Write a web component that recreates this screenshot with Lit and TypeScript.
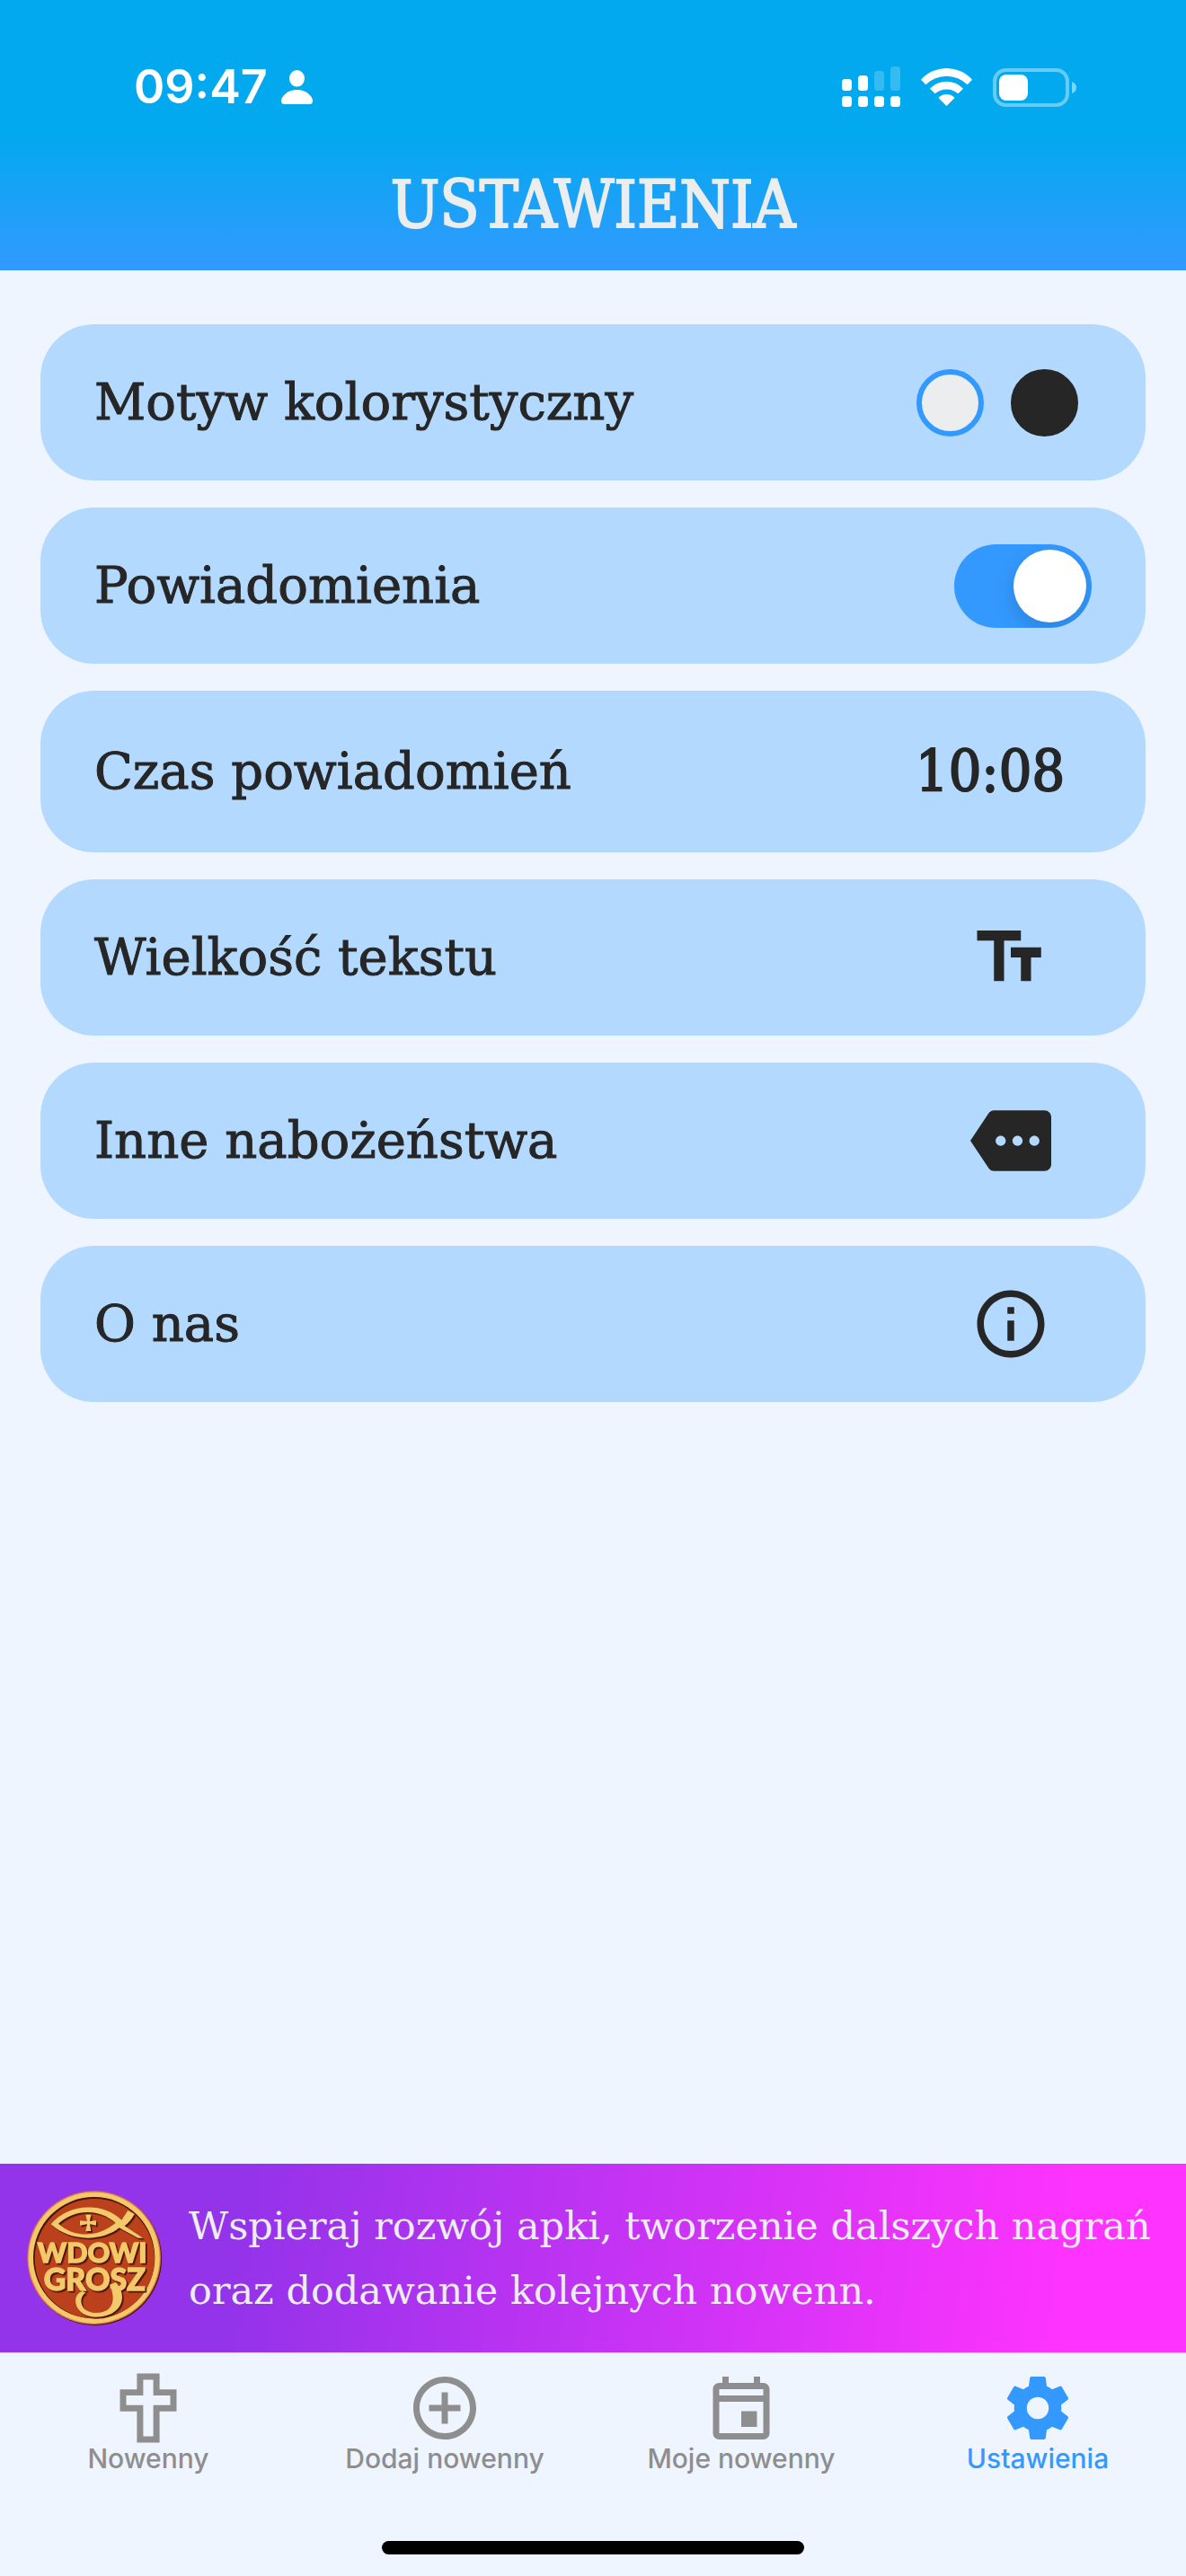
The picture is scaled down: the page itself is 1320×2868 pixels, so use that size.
import { LitElement, html, svg, css, nothing } from "lit";
import { customElement, property, state } from "lit/decorators.js";
import { classMap } from "lit/directives/class-map.js";

const ICONS: Record<string, string> = {
  textSize: "M2 4v3h5v12h3V7h5V4H2zm19 5h-9v3h3v7h3v-7h3V9z",
  more:
    "M22 3H7c-.69 0-1.23.35-1.59.88L0 12l5.41 8.11c.36.53.9.89 1.59.89h15c1.1 0 2-.9 2-2V5c0-1.1-.9-2-2-2zM9 13.5c-.83 0-1.5-.67-1.5-1.5s.67-1.5 1.5-1.5 1.5.67 1.5 1.5-.67 1.5-1.5 1.5zm5 0c-.83 0-1.5-.67-1.5-1.5s.67-1.5 1.5-1.5 1.5.67 1.5 1.5-.67 1.5-1.5 1.5zm5 0c-.83 0-1.5-.67-1.5-1.5s.67-1.5 1.5-1.5 1.5.67 1.5 1.5-.67 1.5-1.5 1.5z",
  info:
    "M11 17h2v-6h-2v6zm1-15C6.48 2 2 6.48 2 12s4.48 10 10 10 10-4.48 10-10S17.52 2 12 2zm0 18c-4.41 0-8-3.59-8-8s3.59-8 8-8 8 3.59 8 8-3.59 8-8 8zM11 9h2V7h-2v2z",
  cross:
    "M8.4 1h7.2v5.1H21v7h-5.4V23H8.4v-9.9H3v-7h5.4zM10.4 3v5H5v3.1h5.4V21h3.2v-9.9H19V8h-5.4V3z",
  add:
    "M13 7h-2v4H7v2h4v4h2v-4h4v-2h-4V7zm-1-5C6.48 2 2 6.48 2 12s4.48 10 10 10 10-4.48 10-10S17.52 2 12 2zm0 18c-4.41 0-8-3.59-8-8s3.59-8 8-8 8 3.59 8 8-3.59 8-8 8z",
  calendar:
    "M19 4h-1V2h-2v2H8V2H6v2H5c-1.1 0-2 .9-2 2v14c0 1.1.9 2 2 2h14c1.1 0 2-.9 2-2V6c0-1.1-.9-2-2-2zm0 16H5V10h14v10zm0-12H5V6h14v2zM12 13h5v5h-5z",
  cog:
    "M12 15.5A3.5 3.5 0 0 1 8.5 12 3.5 3.5 0 0 1 12 8.5a3.5 3.5 0 0 1 3.5 3.5 3.5 3.5 0 0 1-3.5 3.5M19.43 12.97C19.47 12.65 19.5 12.33 19.5 12S19.47 11.34 19.43 11L21.54 9.37C21.73 9.22 21.78 8.95 21.66 8.73L19.66 5.27C19.54 5.05 19.27 4.96 19.05 5.05L16.56 6.05C16.04 5.66 15.5 5.32 14.87 5.07L14.5 2.42C14.46 2.18 14.25 2 14 2H10C9.75 2 9.54 2.18 9.5 2.42L9.13 5.07C8.5 5.32 7.96 5.66 7.44 6.05L4.95 5.05C4.73 4.96 4.46 5.05 4.34 5.27L2.34 8.73C2.21 8.95 2.27 9.22 2.46 9.37L4.57 11C4.53 11.34 4.5 11.67 4.5 12S4.53 12.65 4.57 12.97L2.46 14.63C2.27 14.78 2.21 15.05 2.34 15.27L4.34 18.73C4.46 18.95 4.73 19.03 4.95 18.95L7.44 17.94C7.96 18.34 8.5 18.68 9.13 18.93L9.5 21.58C9.54 21.82 9.75 22 10 22H14C14.25 22 14.46 21.82 14.5 21.58L14.87 18.93C15.5 18.67 16.04 18.34 16.56 17.94L19.05 18.95C19.27 19.03 19.54 18.95 19.66 18.73L21.66 15.27C21.78 15.05 21.73 14.78 21.54 14.63L19.43 12.97Z",
};

@customElement("app-icon")
class AppIcon extends LitElement {
  @property() name = "info";

  static styles = css`
    :host {
      display: block;
      flex: none;
    }
    .glyph {
      display: block;
      width: 100%;
      height: 100%;
      fill: currentColor;
    }
  `;

  render() {
    return html`<svg class="glyph" viewBox="0 0 24 24" aria-hidden="true">
      <path fill-rule="evenodd" d=${ICONS[this.name]} />
    </svg>`;
  }
}

@customElement("status-bar")
class StatusBar extends LitElement {
  static styles = css`
    :host {
      display: flex;
      align-items: center;
      justify-content: space-between;
      padding: 74px 122px 0 149px;
      color: #fff;
    }
    .group {
      display: flex;
      align-items: center;
    }
    .left {
      gap: 15px;
    }
    .right {
      gap: 23px;
    }
    .clock {
      font: 600 52px/46px Inter, "Liberation Sans", sans-serif;
    }
    svg {
      display: block;
      fill: currentColor;
    }
  `;

  render() {
    return html`
      <div class="group left">
        <time class="clock">09:47</time>
        <svg width="35" height="38" viewBox="0 0 35 38" aria-hidden="true">
          <ellipse cx="17.5" cy="9.3" rx="8.5" ry="9.3" />
          <path d="M17.500 22C27 22 35 28.500 35 34.500C35 37 33.500 38 31.500 38H3.500C1.500 38 0 37 0 34.500C0 28.500 8 22 17.500 22z" />
        </svg>
      </div>
      <div class="group right">
        <svg width="65" height="46" viewBox="0 0 65 46" aria-hidden="true">
          ${[0, 18, 36, 54].map(
            (x, i) => svg`
              <rect x=${x} y=${[14, 10, 5, 0][i]} width="11" height=${[13, 17, 22, 27][i]} rx="3.500" opacity=${i < 2 ? 1 : 0.2} />
              <rect x=${x} y="33" width="11" height="12" rx="3.500" />`
          )}
        </svg>
        <svg width="57" height="42" viewBox="0 0 57 42" aria-hidden="true">
          <path d="M0 12.700A38.300 38.300 0 0 1 57 12.700L51.700 18.300A32.800 32.800 0 0 0 5.300 18.300z" />
          <path d="M10 22.700A25.400 25.400 0 0 1 47 22.700L41.300 28.300A19.500 19.500 0 0 0 15.700 28.300z" />
          <path d="M19.500 33A12 12 0 0 1 37.500 33L28.500 42z" />
        </svg>
        <svg width="93" height="43" viewBox="0 0 93 43" aria-hidden="true">
          <rect x="2" y="2" width="81" height="39" rx="12.500" fill="none" stroke="currentColor" stroke-width="4" opacity="0.4" />
          <rect x="7" y="7" width="32" height="29" rx="8" />
          <path opacity="0.5" d="M88 15C91 16 93 18.500 93 21.500C93 24.500 91 27 88 28z" />
        </svg>
      </div>
    `;
  }
}

@customElement("support-banner")
class SupportBanner extends LitElement {
  static styles = css`
    :host {
      display: block;
    }
    .banner {
      display: flex;
      align-items: center;
      gap: 30px;
      padding: 30px;
      background: linear-gradient(97deg, #9333ea 20%, #ff33ff 90%);
      color: #ebedef;
      text-decoration: none;
      font: 400 43px/72px "DejaVu Serif", serif;
    }
    .logo {
      display: block;
      flex: none;
      width: 150px;
      height: 150px;
    }
    .emblem {
      fill: #f4c96a;
      filter: drop-shadow(5px 5px 0 #4a1208);
    }
    .word {
      font-family: Lato, "Liberation Sans", sans-serif;
      font-weight: 900;
      stroke: #f4c96a;
      stroke-width: 4px;
    }
  `;

  render() {
    return html`
      <a class="banner" href="#wsparcie">
        <svg class="logo" viewBox="0 0 450 450" role="img" aria-label="Wdowi Grosz">
          <circle cx="227" cy="227" r="223" fill="#4a1208" />
          <circle cx="224" cy="224" r="223" fill="#dc7a48" />
          <circle cx="224" cy="224" r="219" fill="#f4c96a" />
          <circle cx="224" cy="224" r="203" fill="#4a1208" />
          <circle cx="226" cy="227" r="200" fill="#ba411b" />
          <g class="emblem">
            <path
              fill-rule="evenodd"
              d="M80 112C130 47 250 32 316 98L337 66L359 78C350 96 338 108 326 118L388 158L371 158L308 124C250 172 140 170 80 112zM105 110C160 160 240 155 296 108C240 58 160 62 105 110z"
            />
            <path d="M196 80H214L210 102L231 100V116L210 112L214 135H196L201 112L177 116V100L201 102z" />
            <path
              d="M296 306C340 350 318 424 226 422C160 420 144 352 184 336L196 340C168 362 180 406 226 408C286 410 300 366 276 314z"
            />
            <text class="word" x="218" y="241" font-size="92" text-anchor="middle">WDOWI</text>
            <text class="word" x="226" y="333" font-size="102" text-anchor="middle">GROSZ</text>
          </g>
        </svg>
        <span>Wspieraj rozwój apki, tworzenie dalszych nagrań oraz dodawanie kolejnych nowenn.</span>
      </a>
    `;
  }
}

@customElement("tab-bar")
class TabBar extends LitElement {
  @property() current = "ustawienia";

  private tabs = [
    { id: "nowenny", icon: "cross", label: "Nowenny" },
    { id: "dodaj", icon: "add", label: "Dodaj nowenny" },
    { id: "moje", icon: "calendar", label: "Moje nowenny" },
    { id: "ustawienia", icon: "cog", label: "Ustawienia" },
  ];

  static styles = css`
    :host {
      display: block;
      padding-bottom: 24px;
      border-top: 1px solid #d3d8e0;
    }
    .tabs {
      display: grid;
      grid-template-columns: repeat(4, 1fr);
      padding: 19px 0 78px;
    }
    .tab {
      display: flex;
      flex-direction: column;
      align-items: center;
      color: #8e8e8f;
      text-decoration: none;
      font: 500 30px/28px Inter, "Liberation Sans", sans-serif;
    }
    .active {
      color: #3399ff;
    }
    .icon {
      width: 84px;
      height: 84px;
    }
    .home {
      width: 470px;
      max-width: 60%;
      height: 15px;
      margin: 0 auto;
      border-radius: 8px;
      background: #000;
    }
  `;

  render() {
    return html`
      <nav class="tabs">
        ${this.tabs.map(
          (t) => html`<a
            class=${classMap({ tab: true, active: t.id === this.current })}
            href="#${t.id}"
            aria-current=${t.id === this.current ? "page" : nothing}
          >
            <app-icon class="icon" name=${t.icon}></app-icon>
            <span>${t.label}</span>
          </a>`
        )}
      </nav>
      <div class="home"></div>
    `;
  }
}

@customElement("app-root")
class AppRoot extends LitElement {
  @state() private theme = "light";
  @state() private notify = true;

  private links = [
    { id: "tekst", icon: "textSize", label: "Wielkość tekstu" },
    { id: "inne", icon: "more", label: "Inne nabożeństwa" },
    { id: "o-nas", icon: "info", label: "O nas" },
  ];

  static styles = css`
    :host {
      display: flex;
      flex-direction: column;
      min-height: 100vh;
      background: #eef5ff;
      color: #262626;
      font-family: "DejaVu Serif", serif;
    }
    .header {
      padding-bottom: 37px;
      background: linear-gradient(#03a9ef 50%, #3399ff);
    }
    .title {
      margin: 0;
      padding-top: 72px;
      color: #ebedef;
      text-align: center;
      font-family: "DejaVu Serif Condensed", "DejaVu Serif", serif;
      font-size: 72px;
      font-weight: 500;
      line-height: 72px;
      -webkit-text-stroke: 2px currentColor;
    }
    .list {
      flex: 1;
      display: flex;
      flex-direction: column;
      gap: 30px;
      padding: 60px 45px;
    }
    .row {
      box-sizing: border-box;
      display: flex;
      align-items: center;
      justify-content: space-between;
      width: 100%;
      min-height: 174px;
      margin: 0;
      padding: 0 60px;
      border: 0;
      border-radius: 60px;
      background: #b3d9ff;
      color: inherit;
      font: inherit;
      font-size: 56px;
      line-height: 84px;
      text-align: left;
      text-decoration: none;
      -webkit-text-stroke: 1px currentColor;
    }
    .tall {
      min-height: 180px;
    }
    .swatches {
      display: flex;
      gap: 30px;
      padding-right: 15px;
    }
    .swatch {
      appearance: none;
      box-sizing: border-box;
      width: 75px;
      height: 75px;
      margin: 0;
      border: 6px solid transparent;
      border-radius: 50%;
    }
    .light {
      border-color: #ebedef;
      background: #ebedef;
    }
    .dark {
      border-color: #262626;
      background: #262626;
    }
    .swatch:checked {
      border-color: #3399ff;
    }
    .switch {
      appearance: none;
      box-sizing: border-box;
      display: flex;
      width: 153px;
      height: 93px;
      margin: 0;
      padding: 6px;
      border-radius: 47px;
      background: #e2e5ea;
      overflow: hidden;
    }
    .switch::before {
      content: "";
      width: 81px;
      height: 81px;
      border-radius: 50%;
      background: #fff;
      box-shadow: 0 9px 24px rgba(0, 0, 0, 0.15);
    }
    .switch:checked {
      justify-content: flex-end;
      background: #3399ff;
    }
    .time {
      padding-right: 30px;
      font-family: "DejaVu Serif Condensed", "DejaVu Serif", serif;
      font-size: 64px;
      -webkit-text-stroke: 2px currentColor;
    }
    .icon {
      width: 90px;
      height: 90px;
      margin-right: 45px;
    }
  `;

  render() {
    return html`
      <header class="header">
        <status-bar></status-bar>
        <h1 class="title">USTAWIENIA</h1>
      </header>
      <main class="list">
        <div class="row" role="radiogroup" aria-labelledby="theme-label">
          <span id="theme-label">Motyw kolorystyczny</span>
          <span class="swatches">
            ${["light", "dark"].map(
              (t) => html`<input
                class="swatch ${t}"
                type="radio"
                name="theme"
                aria-label=${t === "light" ? "Jasny" : "Ciemny"}
                .checked=${this.theme === t}
                @change=${() => (this.theme = t)}
              />`
            )}
          </span>
        </div>
        <div class="row">
          <label for="notify">Powiadomienia</label>
          <input
            class="switch"
            id="notify"
            type="checkbox"
            role="switch"
            .checked=${this.notify}
            @change=${() => (this.notify = !this.notify)}
          />
        </div>
        <button class="row tall" type="button">
          <span>Czas powiadomień</span>
          <time class="time">10:08</time>
        </button>
        ${this.links.map(
          (l) => html`<a class="row" href="#${l.id}">
            <span>${l.label}</span>
            <app-icon class="icon" name=${l.icon}></app-icon>
          </a>`
        )}
      </main>
      <support-banner></support-banner>
      <tab-bar current="ustawienia"></tab-bar>
    `;
  }
}
